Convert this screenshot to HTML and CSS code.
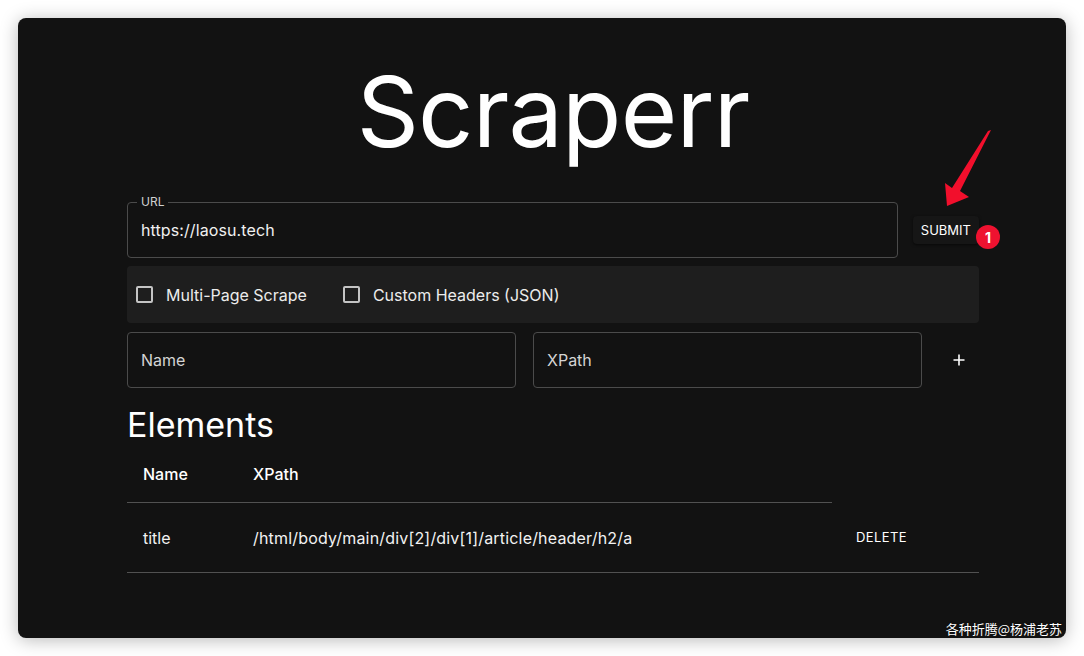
FILE: index.html
```html
<!DOCTYPE html>
<html lang="en">
<head>
<meta charset="utf-8">
<title>Scraperr</title>
<link rel="stylesheet" href="styles.css">
</head>
<body>
<div class="window">
  <main class="content">
    <h1 class="title">Scraperr</h1>
    <div class="url-row">
      <div class="field">
        <span class="field-label">URL</span>
        <span class="field-value">https://laosu.tech</span>
      </div>
      <button class="btn btn-submit">Submit</button>
    </div>
    <div class="options">
      <label class="check"><span class="box"></span><span class="check-text">Multi-Page Scrape</span></label>
      <label class="check"><span class="box"></span><span class="check-text">Custom Headers (JSON)</span></label>
    </div>
    <div class="add-row">
      <div class="field"><span class="placeholder">Name</span></div>
      <div class="field"><span class="placeholder">XPath</span></div>
      <button class="btn-icon" aria-label="add">
        <svg width="14" height="14" viewBox="0 0 14 14"><path d="M7 1.5v11M1.5 7h11" stroke="#fff" stroke-width="1.6" fill="none"/></svg>
      </button>
    </div>
    <h2 class="section-title">Elements</h2>
    <table class="elements">
      <colgroup><col class="c-name"><col class="c-xpath"><col class="c-act"></colgroup>
      <thead>
        <tr><th>Name</th><th>XPath</th></tr>
      </thead>
      <tbody>
        <tr>
          <td>title</td>
          <td class="path">/html/body/main/div[2]/div[1]/article/header/h2/a</td>
          <td><button class="btn btn-delete">Delete</button></td>
        </tr>
      </tbody>
    </table>
  </main>
  <svg class="arrow" width="80" height="90" viewBox="0 0 80 90">
    <polygon points="71,5 68,6 32,63 25,58 27,81 49,72 40,66" fill="#f20f2c"/>
  </svg>
  <span class="badge">1</span>
  <div class="watermark">各种折腾@杨浦老苏</div>
</div>
</body>
</html>
```
FILE: styles.css
```css
* { box-sizing: border-box; }
html, body { margin: 0; padding: 0; }
body {
  background: #ffffff;
  padding: 18px;
  font-family: Inter, "Noto Sans", "Liberation Sans", sans-serif;
  color: #fff;
}
.window {
  position: relative;
  width: 1048px;
  height: 620px;
  background: #121212;
  border-radius: 8px;
  box-shadow: 0 2px 18px rgba(0,0,0,0.28);
}
.content {
  width: 852px;
  margin-left: 109px;
  padding-top: 38px;
}
.title {
  margin: 0;
  text-align: center;
  font-size: 97px;
  line-height: 112px;
  font-weight: 400;
  letter-spacing: -0.8px;
  color: #fff;
}
.url-row {
  margin-top: 34px;
  display: flex;
  align-items: center;
  gap: 15px;
}
.field {
  position: relative;
  flex: 1;
  height: 56px;
  border: 1px solid #4b4b4b;
  border-radius: 4px;
  display: flex;
  align-items: center;
  padding-left: 13px;
  font-size: 16px;
}
.field-label {
  position: absolute;
  left: 9px;
  top: -8px;
  padding: 0 4px;
  background: #121212;
  font-size: 12px;
  line-height: 14px;
  color: #d0d0d0;
}
.field-value { color: #f0f0f0; letter-spacing: 0.1px; }
.placeholder { color: #d4d4d4; }
.btn {
  background: #161616;
  border: none;
  color: #fff;
  font-family: inherit;
  font-weight: 400;
  font-size: 13px;
  letter-spacing: 0;
  text-transform: uppercase;
  padding: 0 8px;
  height: 28px;
  border-radius: 4px;
  cursor: pointer;
}
.btn-submit {
  box-shadow: 0 1px 3px rgba(0,0,0,0.6);
}
.btn-delete {
  background: transparent;
  height: 34px;
  letter-spacing: 0.4px;
}
.options {
  margin-top: 8px;
  height: 57px;
  background: #1e1e1e;
  border-radius: 4px;
  display: flex;
  align-items: center;
  padding-left: 9px;
  gap: 36px;
}
.check {
  display: flex;
  align-items: center;
  font-size: 16px;
  color: #ececec;
}
.box {
  width: 17px;
  height: 17px;
  border: 2px solid #c4c4c4;
  border-radius: 2px;
  margin-right: 13px;
}
.add-row {
  margin-top: 9px;
  display: flex;
  align-items: center;
  gap: 17px;
}
.add-row .field { height: 56px; }
.btn-icon {
  width: 40px;
  height: 40px;
  background: transparent;
  border: none;
  padding: 0;
  display: flex;
  align-items: center;
  justify-content: center;
}
.section-title {
  margin: 16px 0 0;
  font-size: 34px;
  line-height: 42px;
  font-weight: 400;
  color: #fff;
}
.elements {
  border-collapse: collapse;
  width: 852px;
  table-layout: fixed;
  font-size: 16px;
}
.c-name { width: 110px; }
.c-xpath { width: 595px; }
.c-act { width: 147px; }
.elements th {
  text-align: left;
  font-weight: 500;
  padding: 16px;
  line-height: 24px;
  border-bottom: 1px solid #515151;
  color: #fff;
}
.elements td {
  padding: 16px;
  line-height: 24px;
  height: 70px;
  border-bottom: 1px solid #515151;
  color: #f2f2f2;
}
.elements td.path { letter-spacing: 0.18px; }
.arrow {
  position: absolute;
  left: 902px;
  top: 107px;
}
.badge {
  position: absolute;
  left: 958px;
  top: 207px;
  width: 24px;
  height: 24px;
  border-radius: 50%;
  background: #ee1230;
  color: #fff;
  font-size: 14px;
  font-weight: 700;
  display: flex;
  align-items: center;
  justify-content: center;
}
.watermark {
  position: absolute;
  right: 4px;
  bottom: 1px;
  font-family: "Noto Sans CJK SC", sans-serif;
  font-size: 13px;
  line-height: 17px;
  color: #fff;
  text-shadow: 0 0 2px rgba(0,0,0,0.5);
}
```
